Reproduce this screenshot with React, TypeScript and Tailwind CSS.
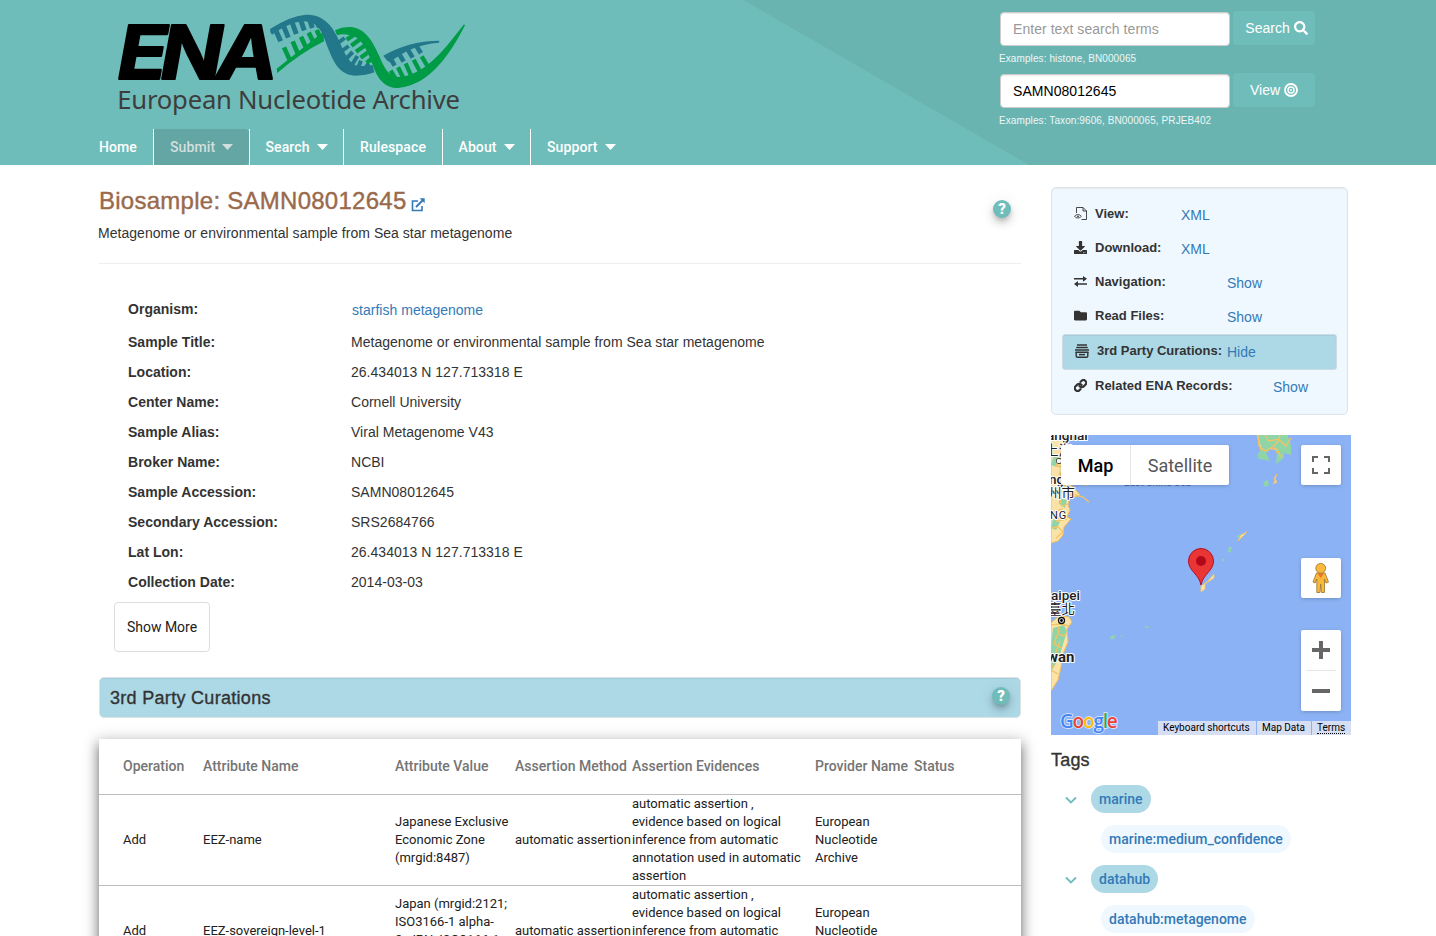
import React from "react";
import { FaSearch, FaDownload, FaFolder } from "react-icons/fa";

const helv = "font-['Helvetica_Neue','Liberation_Sans',sans-serif]";
const roboto = "font-['Roboto',sans-serif]";

function Logo() {
  return (
    <svg className="block h-[126px] w-[400px]" viewBox="0 0 1200 378">
      <text transform="translate(0 237) scale(1.1 1)" x="75 192 345" fill="#000" stroke="#000" strokeWidth="6" strokeLinejoin="round" fontFamily="Inter" fontWeight="700" fontStyle="italic" fontSize="223">ENA</text>
      <text x="82" y="328" fill="#3d3d3d" fontFamily="Noto Sans" fontSize="77" textLength="1028">European Nucleotide Archive</text>
      <path d="M560 206 L700 95 L702 124 Q630 160 562 219Z" fill="#009c45" />
      <g stroke="#009c45" strokeWidth="14" fill="none">
        <path d="M600 182L582 142M624 162L608 124M649 145L633 110M672 130L656 98M694 120L680 90" />
      </g>
      <g stroke="#22788a" strokeWidth="15" fill="none">
        <path d="M556 88L572 124M580 76L595 113M606 66L619 102M632 60L643 91M658 56L667 84M680 62L688 82" />
      </g>
      <path d="M540 87Q600 48 646 44C698 42 724 75 740 107C758 144 773 190 802 197C817 201 830 194 848 196L853 217Q827 227 797 227C754 226 732 190 720 158C700 110 694 73 655 65C620 57 580 81 546 104Q539 97 540 87Z" fill="#22788a" />
      <g stroke="#22788a" strokeWidth="12" fill="none">
        <path d="M738 133L764 114M750 157L776 138M765 180L788 156M784 198L802 168M803 206L813 182M826 207L835 190" />
      </g>
      <path d="M735 91Q758 79 781 81C826 83 850 127 868 169C884 207 898 232 928 231C998 225 1049 169 1122 73L1125 76C1085 154 1022 256 925 264C871 264 857 218 843 182C824 135 809 110 779 106Q758 100 741 106Z" fill="#009c45" />
      <g stroke="#009c45" strokeWidth="13" fill="none">
        <path d="M770 119L796 101M784 137L812 116M798 155L830 133M812 173L844 150M830 188L855 169M902 212L922 246M924 202L943 240M947 190L965 231M971 179L990 215M995 169L1013 199" />
      </g>
      <path d="M880 167C927 139 985 122 1048 122L1047 128C986 132 940 155 899 187Q889 181 880 167Z" fill="#22788a" />
      <g stroke="#22788a" strokeWidth="14" fill="none">
        <path d="M896 166L914 197M923 154L941 185M950 143L968 173M977 134L993 160" />
      </g>
    </svg>
  );
}

const nav = [
  { label: "Home", caret: false, cls: "w-[54px] text-white" },
  { label: "Submit", caret: true, cls: "w-[96px] border-l border-white pl-4 text-[#d3dfde] bg-[radial-gradient(#64a6a3,#64a6a3)] rounded-r-[4px]" },
  { label: "Search", caret: true, cls: "w-[94px] border-l border-white pl-[15.5px] text-white" },
  { label: "Rulespace", caret: false, cls: "w-[99px] border-l border-white pl-4 text-white" },
  { label: "About", caret: true, cls: "w-[88px] border-l border-white pl-[15.5px] text-white" },
  { label: "Support", caret: true, cls: "border-l border-white pl-4 text-white" },
];

function SearchRow({ value, muted, label, icon, example }: { value: string; muted?: boolean; label: string; icon: React.ReactNode; example: string }) {
  return (
    <div className="h-[62px]">
      <div className="flex">
        <div className={`mt-px flex h-[34px] w-[230px] items-center rounded border border-[#ccc] bg-white px-3 text-sm tracking-[0.05px] shadow-[inset_0_1px_1px_rgba(0,0,0,.075)] ${muted ? "text-[#999]" : "text-black"}`}>
          {value}
        </div>
        <div className={`ml-[3px] flex h-[34px] w-[82px] items-center justify-center gap-1 rounded bg-[#6fbdba] text-sm text-white ${muted ? "pl-[5px]" : ""}`}>
          {label} {icon}
        </div>
      </div>
      <div className="-ml-px mt-[5px] text-[10px] leading-4 tracking-[0.1px] text-[#eef7f7]">{example}</div>
    </div>
  );
}

function Header() {
  return (
    <header className="flex h-[165px] bg-[linear-gradient(30deg,#6fbdba_514px,#69b4b1_515px)]">
      <div className="w-[910px] shrink-0 pl-[90px]">
        <div className="h-[129px]"><Logo /></div>
        <nav className={`ml-[9px] flex h-9 text-sm font-medium tracking-[0.1px] ${roboto}`}>
          {nav.map((n) => (
            <div key={n.label} className={`flex items-center gap-[7px] ${n.cls}`}>
              {n.label}
              {n.caret && <svg className="h-[6px] w-[11px]" viewBox="0 0 11 6"><path d="M0 0H11L5.5 6Z" fill="currentColor" /></svg>}
            </div>
          ))}
        </nav>
      </div>
      <div className="ml-[90px] pt-[11px]">
        <SearchRow value="Enter text search terms" muted label="Search" icon={<FaSearch className="size-[14px]" />} example="Examples: histone, BN000065" />
        <SearchRow value="SAMN08012645" label="View" icon={<svg className="size-[14px]" viewBox="0 0 14 14" fill="none" stroke="white"><circle cx="7" cy="7" r="6" strokeWidth="1.8" /><circle cx="7" cy="7" r="3" strokeWidth="1.5" /><circle cx="7" cy="7" r="1" fill="white" stroke="none" /></svg>} example="Examples: Taxon:9606, BN000065, PRJEB402" />
      </div>
    </header>
  );
}

const details = [
  ["Sample Title:", "Metagenome or environmental sample from Sea star metagenome"],
  ["Location:", "26.434013 N 127.713318 E"],
  ["Center Name:", "Cornell University"],
  ["Sample Alias:", "Viral Metagenome V43"],
  ["Broker Name:", "NCBI"],
  ["Sample Accession:", "SAMN08012645"],
  ["Secondary Accession:", "SRS2684766"],
  ["Lat Lon:", "26.434013 N 127.713318 E"],
  ["Collection Date:", "2014-03-03"],
];

function Help() {
  return <span className={`flex size-[18px] items-center justify-center rounded-full bg-[#6fbdba] text-[15px] leading-none font-black text-white shadow-[0_3px_5px_-1px_rgba(0,0,0,.2),0_6px_10px_rgba(0,0,0,.14),0_1px_18px_rgba(0,0,0,.08)] ${roboto}`}>?</span>;
}

const cols = "grid grid-cols-[80px_192px_120px_117px_183px_99px_1fr] items-center pl-6";

function Table() {
  const rows = [
    ["Add", "EEZ-name", ["Japanese Exclusive", "Economic Zone", "(mrgid:8487)"]],
    ["Add", "EEZ-sovereign-level-1", ["Japan (mrgid:2121;", "ISO3166-1 alpha-", "2: JPN; ISO3166-1", "numeric 392)"]],
  ] as [string, string, string[]][];
  return (
    <div className={`mt-[21px] h-[400px] bg-white text-[13px] leading-[18px] text-[#212121] shadow-[0_5px_5px_-3px_rgba(0,0,0,.2),0_8px_10px_1px_rgba(0,0,0,.3),0_3px_14px_2px_rgba(0,0,0,.25)] ${roboto}`}>
      <div className={`${cols} h-14 border-b border-[#bdbdbd] pb-[2px] text-sm font-medium whitespace-nowrap text-[#757575]`}>
        <span>Operation</span><span>Attribute Name</span><span>Attribute Value</span><span>Assertion Method</span><span>Assertion Evidences</span><span>Provider Name</span><span>Status</span>
      </div>
      {rows.map((r) => (
        <div key={r[1]} className={`${cols} h-[91px] border-b border-[#bdbdbd] whitespace-nowrap`}>
          <span>{r[0]}</span><span>{r[1]}</span>
          <span>{r[2].map((t) => <span key={t} className="block">{t}</span>)}</span>
          <span>automatic assertion</span>
          <span>automatic assertion ,<br />evidence based on logical<br />inference from automatic<br />annotation used in automatic<br />assertion</span>
          <span>European<br />Nucleotide<br />Archive</span>
          <span />
        </div>
      ))}
    </div>
  );
}

function Main() {
  return (
    <main className="w-[922px] shrink-0">
      <div className="flex justify-between">
        <h1 className="flex h-[72px] items-center text-2xl tracking-[0.26px] text-[#9a6a4b] [-webkit-text-stroke:0.4px_#9a6a4b]">
          Biosample: SAMN08012645
          <svg className="mt-[7px] ml-[4px] size-[14px]" viewBox="0 0 14 14" fill="none" stroke="#337ab7" strokeWidth="1.6"><path d="M7 3H1.500V12.500H11V8" /><path d="M5 9L12 2" strokeWidth="1.9" /><path d="M8.700 0.300H13.700V5.300Z" fill="#337ab7" stroke="none" /></svg>
        </h1>
        <div className="mt-[35px] mr-[10px]"><Help /></div>
      </div>
      <p className="-mt-[14px] -ml-px h-10 text-sm leading-5 tracking-[0.03px]">Metagenome or environmental sample from Sea star metagenome</p>
      <div className="h-px bg-[#eee]" />
      <div className="pt-[30px] pl-[29px] text-sm tracking-[0.02px]">
        <div className="flex h-[33px] pt-[5px] leading-5"><b className="w-[224px]">Organism:</b><span className="pt-px text-[#337ab7]">starfish metagenome</span></div>
        {details.map(([k, v]) => (
          <div key={k} className="flex h-[30px] pt-[5px] leading-5"><b className="w-[223px]">{k}</b><span>{v}</span></div>
        ))}
      </div>
      <button className={`mt-[5px] ml-[15px] flex h-[50px] w-24 items-center justify-center rounded border border-[#ddd] text-sm text-[#212121] ${roboto}`}>Show More</button>
      <div className="mt-[25px] flex h-[41px] items-center justify-between rounded-[5px] border border-[#dce3e5] bg-[#add8e6] pr-[10px] pl-[10px] shadow-[inset_0_1px_1px_rgba(0,0,0,.05)]">
        <h2 className="text-lg leading-5 tracking-[0.3px] [-webkit-text-stroke:0.35px_#333]">3rd Party Curations</h2>
        <div className="-mt-[3px]"><Help /></div>
      </div>
      <Table />
    </main>
  );
}

const iconBox = "mr-2 mb-px h-[13px] w-[13px] shrink-0";
const FileIcon = () => (
  <svg className={iconBox} viewBox="0 0 13 13" fill="none" stroke="#333" strokeWidth=".9"><path d="M2.500 6V.500H9L12.500 4V12.500H7.500M9 .500V4H12.500" /><path d="M.6 9.300C2 7 5.500 7 7.300 9.300C5.500 11.500 2 11.500 .6 9.300Z" /><circle cx="4" cy="9.300" r=".9" fill="#333" stroke="none" /></svg>
);
const SwapIcon = () => (
  <svg className={iconBox} viewBox="0 0 13 13" fill="#333"><path d="M0 3H9V.9L13 3.800L9 6.700V4.600H0ZM13 8.200H4V6.100L0 9L4 11.900V9.800H13Z" /></svg>
);
const StackIcon = () => (
  <svg className="mr-2 mb-px size-[14px] shrink-0" viewBox="0 0 14 14" fill="none" stroke="#333" strokeWidth="1.4"><path d="M2 1H12M1.300 3.500H12.700" /><path d="M0 6H14M.5 8.300H13.500" /><path d="M1.200 8V12Q1.200 13.200 2.400 13.200H11.600Q12.800 13.200 12.800 12V8" /><path d="M4 10.600H10" strokeWidth="1.5" /></svg>
);
const LinkIcon = () => (
  <svg className={iconBox} viewBox="0 0 24 24" fill="none" stroke="#333" strokeWidth="4" strokeLinecap="round"><path d="M10 13a5.500 5.500 0 0 0 8 .6l3-3a5 5 0 0 0-7-7.200l-2 1.800" /><path d="M14 11a5.500 5.500 0 0 0-8-.6l-3 3a5 5 0 0 0 7 7.200l2-1.800" /></svg>
);

function Row({ icon, label, value, w }: { icon: React.ReactNode; label: string; value: string; w: string }) {
  return (
    <div className="flex h-[34px] items-center">
      {icon}
      <b className={`text-[13px] whitespace-nowrap ${w}`}>{label}</b>
      <span className="pt-px text-sm text-[#337ab7]">{value}</span>
    </div>
  );
}

function Actions() {
  return (
    <div className="h-[228px] w-[297px] rounded-[5px] border border-[#e0e3e6] bg-[#f0f8ff] px-[10px] pt-[9px] shadow-[inset_0_1px_1px_rgba(0,0,0,.05)]">
      <div className="pl-3">
        <Row icon={<FileIcon />} label="View:" value="XML" w="w-[86px]" />
        <Row icon={<FaDownload className={iconBox} />} label="Download:" value="XML" w="w-[86px]" />
        <Row icon={<SwapIcon />} label="Navigation:" value="Show" w="w-[132px]" />
        <Row icon={<FaFolder className={iconBox} />} label="Read Files:" value="Show" w="w-[132px]" />
      </div>
      <div className="mt-px -mb-px h-9 rounded-[3px] border border-[#ccdce2] bg-[#add8e6] pl-3 shadow-[inset_0_1px_1px_rgba(0,0,0,.05)]">
        <div className="-mt-px"><Row icon={<StackIcon />} label="3rd Party Curations:" value="Hide" w="w-[130px]" /></div>
      </div>
      <div className="pl-3"><Row icon={<LinkIcon />} label="Related ENA Records:" value="Show" w="w-[178px]" /></div>
    </div>
  );
}

function MapView() {
  const btn = "absolute right-[10px] w-10 rounded-[2px] bg-white shadow-[0_1px_4px_-1px_rgba(0,0,0,.3)]";
  return (
    <div className={`relative mt-5 h-[300px] w-[300px] overflow-hidden bg-[#8bb2f4] ${roboto}`}>
      <svg className="block size-[300px]" viewBox="0 0 300 300">
        <g fill="#fbe3a8" stroke="#f5bd55" strokeWidth="1">
          <path d="M0 0H10L14 12L9 25L16 45L29 60L24 62L19 60L17 70L19 75L16 82L20 84L13 92L12 100L7 106L0 108Z" />
          <path d="M0 188L8 181L18 182L21 187L16 194L17 207L12 219L10 232L7 245L0 256Z" />
          <path d="M206 0L210 16L216 17L222 10L229 24L234 16L240 14L236 0Z" />
        </g>
        <g fill="#8fd5a8">
          <path d="M3 20L9 24L6 32L0 30ZM8 63L16 65L14 73L8 69ZM2 84L9 87L5 95L0 93Z" />
          <path d="M2 193L13 190L16 197L13 206L8 223L0 237V212Z" />
          <path d="M206 0L211 14L206 20L208 24L219 26L215 18L222 10L226 17L225 29L233 23L233 18L240 20L240 10L236 0ZM212 47L217 45L218 50L214 52Z" />
          <path d="M60 201L65 200L63 204H59ZM69 201L72 199L71 202ZM94 190L99 193H95ZM178 112H181L179 118L177 117ZM171 124H173V126H171ZM185 101L191 99L188 103Z" />
        </g>
        <g fill="none" stroke="#f4c363" strokeWidth="1.3">
          <path d="M0 18L9 22L5 31L14 32L9 39L17 47L8 56L18 58L32 62L38 67M8 63L11 71L17 69M0 78L11 74L6 86L16 84M0 93L7 92L12 97L5 103M10 43L24 47L36 50" />
          <path d="M0 190L9 189L18 191M8 191L7 199L13 201L16 197M6 200L3 209L11 213M9 206L3 222L12 224M5 222L0 235L7 239" />
          <path d="M207 0L208 11L214 16L222 12L228 5L235 11L240 3M214 0L218 6L228 4L229 0M220 14L226 14L230 22" />
        </g>
        <g fill="#fbe3a8" stroke="#f5c063" strokeWidth=".8">
          <path d="M196 97L190 100L187 106L191 102ZM226 39L223 43L224 46L222 49L226 47L224 44Z" /><path d="M163 139L156 147L150 151L150 157L154 154L154 149L163 143Z" />
        </g>
        <g fontFamily="Roboto, 'Noto Sans CJK TC', sans-serif" fontWeight="500" fontSize="13.500" fill="#202124" stroke="#fff" strokeWidth="2" paintOrder="stroke" strokeLinejoin="round">
          <text x="-4" y="5">anghai</text>
          <text x="-6" y="20" fontWeight="400">上海</text>
          <circle cx="8" cy="26" r="2.300" fill="#fff" stroke="#222" strokeWidth="1.200" />
          <text x="-2" y="49">ngzhou</text>
          <text x="-3" y="63" fontWeight="400">州市</text>
          <text x="-1" y="84" fontSize="11" fontWeight="400" letterSpacing="1">NG</text>
          <text x="0" y="165">aipei</text>
          <text x="-3" y="179" fontWeight="400">臺北</text>
          <text x="-4" y="227" fontSize="15" fontWeight="700">wan</text>
          <text x="73" y="51" fontSize="10" stroke="none" fill="#4b6fb3">East China Sea</text>
        </g>
        <circle cx="10.500" cy="185.500" r="3" fill="#fff" stroke="#111" strokeWidth="1.300" /><circle cx="10.500" cy="185.500" r="1.400" />
        <path d="M150 150C148 139 137.500 136 137.500 126A12.500 12.500 0 0 1 162.500 126C162.500 136 152 139 150 150Z" fill="#ea3535" stroke="#b41225" />
        <circle cx="150" cy="126" r="5" fill="#b1081b" />
      </svg>
      <div className="absolute top-[10px] left-[10px] flex h-10 w-[168px] items-center rounded-[2px] bg-white text-lg shadow-[0_1px_4px_-1px_rgba(0,0,0,.3)]">
        <span className="flex h-10 w-[70px] items-center justify-center border-r border-[#e6e6e6] pt-[2px] font-medium text-black">Map</span>
        <span className="flex-1 pt-[2px] text-center text-[#565656]">Satellite</span>
      </div>
      <div className={`${btn} top-[10px] h-10`}>
        <svg className="size-10" viewBox="0 0 40 40" fill="none" stroke="#666" strokeWidth="2"><path d="M12 17V12H17M23 12H28V17M28 23V28H23M17 28H12V23" /></svg>
      </div>
      <div className={`${btn} top-[123px] h-10`}>
        <svg className="size-10" viewBox="0 0 40 40" fill="#fbb93c" stroke="#95722c" strokeWidth=".8"><path d="M15.500 15H24L27.500 24L25 25L23.500 21V34.500H20.500L19.700 26L19 34.500H15.800V21L14 25L12 24Z" /><circle cx="19.700" cy="10.300" r="4.900" /><path d="M16.500 15.500H23L19.700 20Z" fill="#e5762b" stroke="none" /></svg>
      </div>
      <div className={`${btn} top-[195px] h-[81px]`}>
        <svg className="h-[81px] w-10" viewBox="0 0 40 81"><path d="M11 20H29M20 11V29M11 61H29" stroke="#666" strokeWidth="4" /><path d="M5 40.500H35" stroke="#e6e6e6" /></svg>
      </div>
      <div className="absolute bottom-[3px] left-[9px] flex text-[19px] leading-[22px] font-semibold tracking-[-1.2px] [paint-order:stroke] [-webkit-text-stroke:1.5px_#e8eefb] font-['Open_Sans',sans-serif]">
        <span className="text-[#4285f4]">G</span><span className="text-[#ea4335]">o</span><span className="text-[#fbbc05]">o</span><span className="text-[#4285f4]">g</span><span className="text-[#34a853]">l</span><span className="text-[#ea4335]">e</span>
      </div>
      <div className="absolute right-0 bottom-0 flex h-[14px] w-[193px] gap-px text-[10px] leading-[14px] text-black">
        <span className="w-[98px] bg-[#d5def2] pl-[5px]">Keyboard shortcuts</span>
        <span className="w-[54px] bg-[#d5def2] pl-[5px]">Map Data</span>
        <span className="flex-1 bg-[#d5def2] pl-[5px]"><span className="inline-block h-[13px] border-b border-dotted border-black">Terms</span></span>
      </div>
    </div>
  );
}

function Tags() {
  const chip = "flex h-7 items-center rounded-full px-2";
  return (
    <div>
      <h2 className="mt-[15px] text-lg leading-5 tracking-[0.2px] [-webkit-text-stroke:0.35px_#333]">Tags</h2>
      <div className={`mt-[15px] text-sm font-medium text-[#337ab7] ${roboto}`}>
        {[["marine", "marine:medium_confidence"], ["datahub", "datahub:metagenome"]].map(([a, b]) => (
          <div key={a}>
            <div className="flex h-10 pl-[14px]">
              <svg className="mt-[11px] mr-[14px] h-[8px] w-[12px]" viewBox="0 0 12 8" fill="none" stroke="#6fbdba" strokeWidth="1.8"><path d="M1 1.500L6 6.500L11 1.500" /></svg>
              <span className={`${chip} bg-[#add8e6]`}>{a}</span>
            </div>
            <div className="flex h-10 pl-[50px]"><span className={`${chip} bg-[#f0f8ff]`}>{b}</span></div>
          </div>
        ))}
      </div>
    </div>
  );
}

export default function App() {
  return (
    <div className={`h-[936px] w-[1436px] overflow-hidden bg-white text-[#333] ${helv}`}>
      <Header />
      <div className="flex gap-[30px] pl-[99px]">
        <Main />
        <aside className="w-[300px] shrink-0 pt-[22px]">
          <Actions />
          <MapView />
          <Tags />
        </aside>
      </div>
    </div>
  );
}
